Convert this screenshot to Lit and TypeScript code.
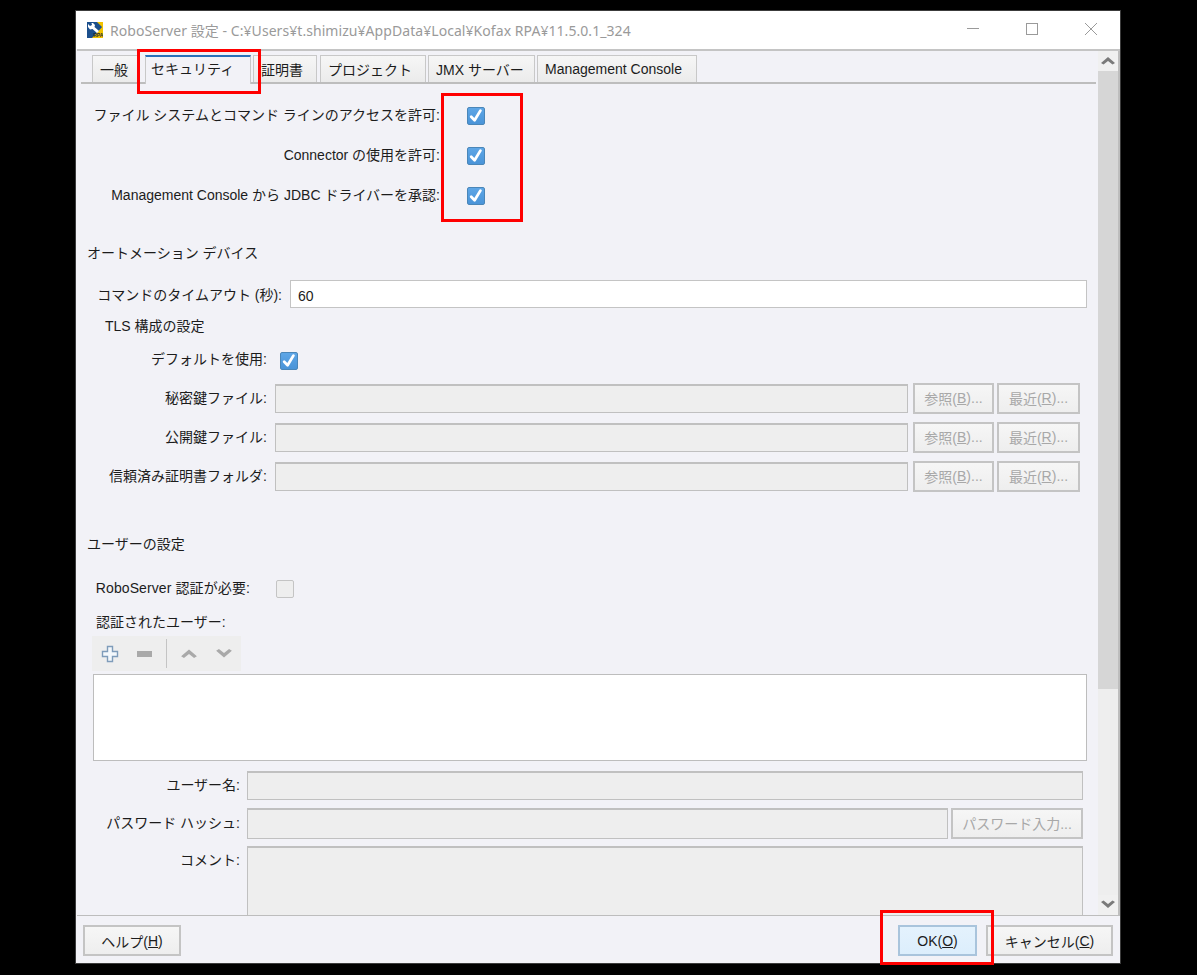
import { LitElement, html, css, svg } from "lit";
import { customElement } from "lit/decorators.js";

const check = html`<span class="cb"><svg width="18" height="18" viewBox="0 0 18 18"><path d="M4.2 9.8 L7.6 13.2 L13.4 3.6" fill="none" stroke="#fff" stroke-width="2.8" stroke-linejoin="round" stroke-linecap="round"/></svg></span>`;
const chevUp = (c: string) => svg`<path d="M1 10 L8 4 L15 10 L12.5 11.5 L8 8 L3.5 11.5 Z" fill="${c}"/>`;
const chevDown = (c: string) => svg`<path d="M1 5 L8 11 L15 5 L12.5 3.5 L8 7 L3.5 3.5 Z" fill="${c}"/>`;

@customElement("app-root")
export class AppRoot extends LitElement {
  static styles = css`
    :host { display: block; width: 1197px; height: 975px; background: #000; padding: 10px 0 0 75px; box-sizing: border-box; position: relative; overflow: hidden;
      font-family: "Liberation Sans", "Noto Sans CJK JP", sans-serif; font-size: 14px; color: #1c1c1c; }
    .win { width: 1046px; height: 954px; box-sizing: border-box; border: 1px solid #3c3c3c; background: #f2f2f7; display: flex; flex-direction: column; }
    .title { height: 38px; background: #fff; display: flex; align-items: center; padding-left: 11px; color: #9a9a9a; font-family: "Noto Sans", "Noto Sans CJK JP", sans-serif; font-size: 14px; flex: none; }
    .title .t { margin-left: 7px; letter-spacing: .06px; }
    .title svg { display: block; flex: none; }
    .ctl { margin-left: auto; display: flex; }
    .ctl span { width: 59px; display: flex; justify-content: center; }
    .body { height: 867px; border-top: 2px solid #c4c4c4; border-bottom: 1px solid #bdbdbd; box-sizing: border-box; display: flex; overflow: hidden; margin-left: 1px; flex: none; }
    .main { width: 1021px; flex: none; overflow: hidden; }
    .sb { width: 20px; flex: none; display: flex; flex-direction: column; }
    .sb .btn { height: 20px; background: #f0f0f0; display: flex; align-items: center; justify-content: center; flex: none; }
    .sb .thumb { height: 618px; background: #d6d6d6; flex: none; }
    .sb .track { flex: 1; background: #eeeeee; }
    .edge { width: 2px; background: #bdbdbd; flex: none; }

    .tabs { display: flex; align-items: flex-end; height: 33px; box-sizing: border-box; padding: 4px 0 0 11px; border-bottom: 2px solid #bdbdbd; margin-left: 4px; width: 1015px; }
    .tab { height: 27px; box-sizing: border-box; border: 1px solid #c8c8c8; border-bottom: none; background: linear-gradient(#f6f6f6, #ebebeb); display: flex; align-items: center; justify-content: flex-start; padding: 0 0 0 7px; flex: none; }
    .tab.sel { border-top: 2px solid #2a70b8; background: #f2f2f7; height: 29px; margin-bottom: -2px; padding-bottom: 6px; padding-left: 5px; }
    .row { display: flex; align-items: center; }
    .lab { text-align: right; flex: none; white-space: nowrap; }
    .sec { height: 40px; }
    .sec .lab { width: 363px; padding-bottom: 4px; }
    .sec .cb { margin-left: 27px; }
    .head { height: 20px; padding-left: 10px; padding-bottom: 4px; box-sizing: border-box; }
    .cb { width: 18px; height: 18px; box-sizing: border-box; border: 1px solid #4a86b8; border-radius: 2px; background: linear-gradient(#5ea6e6, #4a94d8); display: block; flex: none; position: relative; }
    .cb svg { position: absolute; left: -1px; top: -1px; display: block; }
    .cb.off { background: #eeeeee; border: 1px solid #c4c4c4; }
    .in { height: 28px; box-sizing: border-box; border: 1px solid #c4c4c4; background: #fff; display: flex; align-items: center; padding: 3px 0 0 7px; flex: none; }
    .dis { background: #eeeeee; border: 1px solid #c0c0c0; border-top: 2px solid #c0c0c0; box-sizing: border-box; }
    .b { box-sizing: border-box; border: 2px solid #c4c4c4; background: linear-gradient(#f6f6f6, #eeeeee); display: flex; align-items: center; justify-content: center; flex: none; white-space: nowrap; }
    .b.off { color: #a8a8a8; padding-bottom: 2px; }
    .fileRow { height: 39px; }
    .fileRow .lab { width: 190px; padding-bottom: 4px; }
    .fileRow .dis { width: 633px; margin-left: 8px; height: 29px; }
    .fileRow .b { height: 31px; }
    .fileRow .b1 { width: 81px; margin-left: 5px; }
    .fileRow .b2 { width: 83px; margin-left: 3px; }
    .tool { width: 149px; height: 35px; background: #eeeeee; margin: 2px 0 0 15px; display: flex; align-items: center; }
    .tool svg { display: block; flex: none; }
    .tool .sep { width: 1px; height: 29px; background: #c4c4c4; }
    .list { width: 994px; height: 87px; box-sizing: border-box; margin: 3px 0 0 16px; border: 1px solid #bdbdbd; background: #fff; }
    .ur .lab { width: 163px; padding-bottom: 4px; }
    .ur .dis { margin-left: 7px; flex: none; }
    .comment { height: 69px; display: flex; margin-top: 7px; }
    .comment .lab { width: 163px; padding-top: 3px; box-sizing: border-box; }
    .comment .dis { width: 836px; margin-left: 7px; border-bottom: none; }
    .foot { flex: 1; display: flex; align-items: flex-start; padding: 9px 7px 0 7px; }
    .foot .b { height: 31px; }
    .ok { background: linear-gradient(#e4f2fd, #dceefc) !important; border-color: #a9c4dc !important; }
    .red { position: absolute; border: 3px solid #f00; box-sizing: border-box; pointer-events: none; }
  `;

  private file(label: string) {
    return html`<div class="row fileRow"><span class="lab">${label}:</span><span class="dis"></span>
      <span class="b off b1">参照(<u>B</u>)...</span><span class="b off b2">最近(<u>R</u>)...</span></div>`;
  }

  render() {
    return html`
      <div class="win">
        <div class="title">
          <svg width="16" height="16" viewBox="0 0 16 16">
            <rect width="16" height="16" fill="#1c4f8c"/>
            <path d="M16 0 V16 H5 L16 4 Z" fill="#f2c200"/>
            <path d="M10 0 H16 V6 Z" fill="#f2c200"/>
            <path d="M1 2 L3 4 L5 3 L4.5 1 L6 1 L8 3 L7.5 5 L12 9 L10 11 L5.5 7 L3 7.5 L1 5 Z" fill="#fff"/>
            <text x="6.2" y="15" font-size="5" font-weight="700" font-family="Liberation Sans" fill="#1a2a3a">RPA</text>
          </svg>
          <span class="t">RoboServer 設定 - C:¥Users¥t.shimizu¥AppData¥Local¥Kofax RPA¥11.5.0.1_324</span>
          <div class="ctl">
            <span><svg width="14" height="14" viewBox="0 0 14 14"><path d="M1 5.5 H13" stroke="#9a9a9a" fill="none"/></svg></span>
            <span><svg width="14" height="14" viewBox="0 0 14 14"><rect x="1.5" y="0.5" width="11" height="11" stroke="#9a9a9a" fill="none"/></svg></span>
            <span><svg width="14" height="14" viewBox="0 0 14 14"><path d="M1 0 L13 12 M13 0 L1 12" stroke="#9a9a9a" fill="none"/></svg></span>
          </div>
        </div>
        <div class="body">
          <div class="main">
            <div class="tabs">
              <div class="tab" style="width:48px;margin-right:5px">一般</div>
              <div class="tab sel" style="width:106px;margin-right:2px">セキュリティ</div>
              <div class="tab" style="width:64px;margin-right:3px">証明書</div>
              <div class="tab" style="width:106px;margin-right:2px">プロジェクト</div>
              <div class="tab" style="width:107px;margin-right:2px">JMX サーバー</div>
              <div class="tab" style="width:160px">Management Console</div>
            </div>
            <div style="height:12px"></div>
            <div class="row sec"><span class="lab">ファイル システムとコマンド ラインのアクセスを許可:</span>${check}</div>
            <div class="row sec"><span class="lab">Connector の使用を許可:</span>${check}</div>
            <div class="row sec"><span class="lab">Management Console から JDBC ドライバーを承認:</span>${check}</div>
            <div class="row head" style="margin-top:28px">オートメーション デバイス</div>
            <div class="row" style="margin-top:16px">
              <span class="lab" style="width:205px">コマンドのタイムアウト (秒):</span>
              <span class="in" style="width:797px;margin-left:8px">60</span>
            </div>
            <div class="row head" style="margin-top:9px;padding-left:28px">TLS 構成の設定</div>
            <div class="row" style="height:24px;margin-top:12px">
              <span class="lab" style="width:190px;padding-bottom:6px">デフォルトを使用:</span>
              <span style="margin-left:13px">${check}</span>
            </div>
            <div style="height:6px"></div>
            ${this.file("秘密鍵ファイル")}
            ${this.file("公開鍵ファイル")}
            ${this.file("信頼済み証明書フォルダ")}
            <div class="row head" style="margin-top:39px">ユーザーの設定</div>
            <div class="row" style="height:24px;margin-top:22px">
              <span class="lab" style="width:173px;padding-bottom:5px;letter-spacing:.1px">RoboServer 認証が必要:</span>
              <span class="cb off" style="margin-left:26px"></span>
            </div>
            <div class="row head" style="margin-top:13px;padding-left:19px;padding-bottom:6px">認証されたユーザー:</div>
            <div class="tool">
              <svg style="margin-left:9px" width="18" height="18" viewBox="0 0 18 18"><path d="M6.5 1.5 H11.5 V6.5 H16.5 V11.5 H11.5 V16.5 H6.5 V11.5 H1.5 V6.5 H6.5 Z" fill="#f4f8fc" stroke="#7f9cba" stroke-width="1.4"/></svg>
              <svg style="margin-left:16px" width="18" height="18" viewBox="0 0 18 18"><rect x="2" y="6" width="15" height="6" fill="#a9a9a9"/></svg>
              <span class="sep" style="margin-left:13px"></span>
              <svg style="margin-left:13px" width="18" height="18" viewBox="0 0 16 16">${chevUp("#a9a9a9")}</svg>
              <svg style="margin-left:17px" width="18" height="18" viewBox="0 0 16 16">${chevDown("#a9a9a9")}</svg>
            </div>
            <div class="list"></div>
            <div class="row ur" style="margin-top:10px">
              <span class="lab">ユーザー名:</span><span class="dis" style="width:836px;height:29px"></span>
            </div>
            <div class="row ur" style="margin-top:8px">
              <span class="lab">パスワード ハッシュ:</span><span class="dis" style="width:701px;height:31px"></span>
              <span class="b off" style="width:132px;height:31px;margin-left:3px">パスワード入力...</span>
            </div>
            <div class="comment"><span class="lab">コメント:</span><span class="dis"></span></div>
          </div>
          <div class="sb">
            <div class="btn"><svg width="16" height="16" viewBox="0 0 16 16">${chevUp("#7a7a7a")}</svg></div>
            <div class="thumb"></div>
            <div class="track"></div>
            <div class="btn"><svg width="16" height="16" viewBox="0 0 16 16">${chevDown("#7a7a7a")}</svg></div>
          </div>
          <div class="edge"></div>
        </div>
        <div class="foot">
          <span class="b" style="width:98px">ヘルプ(<u>H</u>)</span>
          <span class="b ok" style="width:79px;margin-left:auto">OK(<u>O</u>)</span>
          <span class="b" style="width:127px;margin-left:9px">キャンセル(<u>C</u>)</span>
        </div>
      </div>
      <div class="red" style="left:137px;top:49px;width:124px;height:45px"></div>
      <div class="red" style="left:441px;top:93px;width:82px;height:129px"></div>
      <div class="red" style="left:880px;top:910px;width:114px;height:55px"></div>
    `;
  }
}
